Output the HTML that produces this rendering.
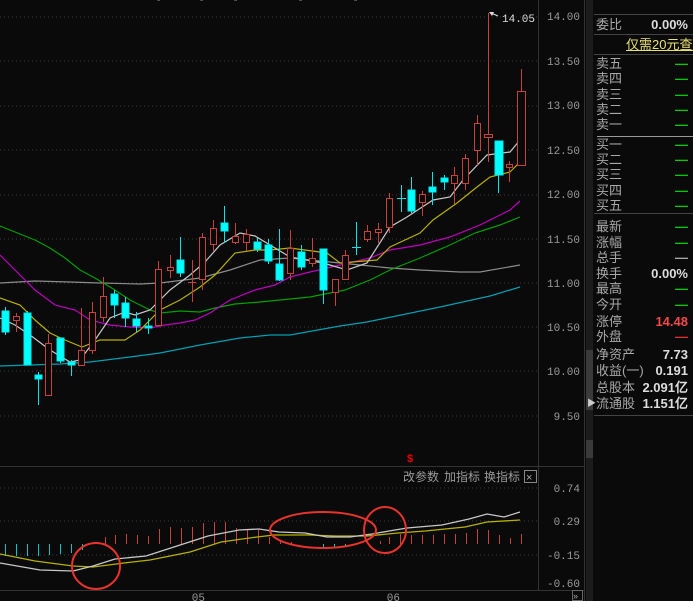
<!DOCTYPE html>
<html><head><meta charset="utf-8"><style>
body{margin:0;background:#0a0a0a;width:693px;height:601px;overflow:hidden;position:relative;font-family:"Liberation Sans","Noto Sans CJK SC",sans-serif}
svg{position:absolute;left:0;top:0}
.rp{position:absolute;left:596px;width:97px;font-size:13px;color:#a8a8a8;line-height:15px}
.rp span{position:absolute;right:5px;color:#ddd;font-weight:bold;font-family:"Liberation Sans",sans-serif}
.g{color:#0c0!important}
</style></head><body>
<svg width="693" height="601" xmlns="http://www.w3.org/2000/svg">
<g stroke="#3a3a3a" stroke-dasharray="1,3">
<line x1="0" y1="17" x2="538" y2="17"/><line x1="0" y1="61" x2="538" y2="61"/><line x1="0" y1="106" x2="538" y2="106"/><line x1="0" y1="150" x2="538" y2="150"/><line x1="0" y1="195" x2="538" y2="195"/><line x1="0" y1="239" x2="538" y2="239"/><line x1="0" y1="283" x2="538" y2="283"/><line x1="0" y1="327" x2="538" y2="327"/><line x1="0" y1="371" x2="538" y2="371"/><line x1="0" y1="416" x2="538" y2="416"/>
<line x1="0" y1="488" x2="538" y2="488"/><line x1="0" y1="521" x2="538" y2="521"/><line x1="0" y1="555" x2="538" y2="555"/>
</g>
<g stroke="#333" fill="none">
<line x1="538.5" y1="0" x2="538.5" y2="590"/>
<line x1="0" y1="466.5" x2="584" y2="466.5"/>
<line x1="0" y1="590.5" x2="584" y2="590.5"/>
<line x1="584.5" y1="0" x2="584.5" y2="601"/>
</g>
<rect x="586" y="0" width="7" height="601" fill="#1c1c1c"/>
<rect x="586" y="350" width="7" height="60" fill="#3a3a3a"/>
<rect x="586" y="440" width="7" height="18" fill="#3a3a3a"/>
<text x="587" y="406" fill="#ccc" font-size="9">▶</text>
<g fill="#9a9a9a" font-size="11" font-family="Liberation Mono,monospace" text-anchor="end">
<text x="580" y="20">14.00</text><text x="580" y="65">13.50</text><text x="580" y="109">13.00</text><text x="580" y="154">12.50</text><text x="580" y="198">12.00</text><text x="580" y="243">11.50</text><text x="580" y="287">11.00</text><text x="580" y="331">10.50</text><text x="580" y="375">10.00</text><text x="580" y="420">9.50</text>
<text x="580" y="492">0.74</text><text x="580" y="525">0.29</text><text x="580" y="559">-0.15</text><text x="580" y="587">-0.60</text>
<text x="205" y="601">05</text><text x="400" y="601">06</text>
</g>
<g fill="#ddd" font-size="8"><text x="157" y="4">*</text><text x="200" y="4">*</text><text x="234" y="4">*</text><text x="299" y="4">*</text><text x="354" y="4">*</text></g>
<!-- MAs -->
<g fill="none" stroke-width="1.2">
<polyline stroke="#00a0b4" points="0,366 30,365 60,364 90,362 130,357 160,353 200,345 240,338 270,335 290,335 340,326 367,322 440,307 490,296 520,287"/>
<polyline stroke="#8c8c8c" points="0,283 35,281 70,282 100,283 140,284 160,283 200,278 230,270 260,260 290,258 330,262 360,265 390,268 420,270 460,272 480,272 520,265"/>
<polyline stroke="#00a000" points="0,226 15,232 35,240 50,248 65,258 80,270 95,278 115,290 130,300 150,310 160,313 180,311 200,312 215,308 235,304 260,302 290,299 310,297 345,290 370,280 390,270 420,258 450,245 475,233 500,225 520,217"/>
<polyline stroke="#c000c0" points="0,255 20,275 35,290 55,305 75,310 90,320 110,325 130,327 150,328 165,325 180,323 195,320 210,313 230,300 255,290 275,285 290,277 310,272 340,265 370,258 390,250 420,245 450,237 480,225 500,215 510,210 520,201"/>
<polyline stroke="#b8b000" points="0,298 20,305 35,320 50,333 65,340 82,347 100,340 125,340 140,330 160,310 180,300 200,287 215,275 235,253 255,250 270,250 290,248 327,253 340,263 377,260 390,247 420,233 433,220 457,203 477,187 490,177 510,172 520,162"/>
<polyline stroke="#c8c8c8" points="0,318 15,325 30,335 50,350 70,362 80,360 95,340 110,318 125,312 135,315 150,310 170,290 190,275 205,262 220,245 240,233 255,236 270,245 290,257 323,263 347,270 367,263 390,227 407,217 433,200 450,197 463,180 487,155 510,152 520,140"/>
</g>
<!-- candles -->
<g stroke="#c8403a" fill="#0a0a0a">
<line x1="16.5" y1="313" x2="16.5" y2="332"/><rect x="13.5" y="316.5" width="6" height="4"/>
<line x1="48.5" y1="334" x2="48.5" y2="395"/><rect x="45.5" y="343.5" width="6" height="52"/>
<line x1="81.5" y1="308" x2="81.5" y2="365"/><rect x="78.5" y="350.5" width="6" height="15"/>
<line x1="92.5" y1="302" x2="92.5" y2="354"/><rect x="89.5" y="312.5" width="6" height="38"/>
<line x1="103.5" y1="277" x2="103.5" y2="322"/><rect x="100.5" y="296.5" width="6" height="21"/>
<line x1="158.5" y1="261" x2="158.5" y2="325"/><rect x="155.5" y="269.5" width="6" height="56"/>
<line x1="170.5" y1="255" x2="170.5" y2="278"/><rect x="167.5" y="267.5" width="6" height="3"/>
<line x1="192.5" y1="260" x2="192.5" y2="302"/><line x1="188" y1="282.5" x2="196" y2="282.5"/>
<line x1="202.5" y1="233" x2="202.5" y2="290"/><rect x="199.5" y="237.5" width="6" height="42"/>
<line x1="213.5" y1="220" x2="213.5" y2="252"/><rect x="210.5" y="228.5" width="6" height="16"/>
<line x1="235.5" y1="223" x2="235.5" y2="244"/><rect x="232.5" y="236.5" width="6" height="6"/>
<line x1="246.5" y1="229" x2="246.5" y2="251"/><rect x="243.5" y="234.5" width="6" height="8"/>
<line x1="290.5" y1="230" x2="290.5" y2="280"/><rect x="287.5" y="248.5" width="6" height="25"/>
<line x1="312.5" y1="238" x2="312.5" y2="267"/><rect x="309.5" y="258.5" width="6" height="5"/>
<line x1="335.5" y1="279" x2="335.5" y2="306"/><rect x="332.5" y="279.5" width="6" height="13"/>
<line x1="345.5" y1="250" x2="345.5" y2="280"/><rect x="342.5" y="255.5" width="6" height="24"/>
<line x1="367.5" y1="225" x2="367.5" y2="242"/><rect x="364.5" y="231.5" width="6" height="8"/>
<line x1="378.5" y1="223" x2="378.5" y2="243"/><rect x="375.5" y="229.5" width="6" height="3"/>
<line x1="389.5" y1="193" x2="389.5" y2="233"/><rect x="386.5" y="198.5" width="6" height="29"/>
<line x1="422.5" y1="191" x2="422.5" y2="216"/><rect x="419.5" y="194.5" width="6" height="8"/>
<line x1="454.5" y1="167" x2="454.5" y2="204"/><rect x="451.5" y="175.5" width="6" height="8"/>
<line x1="465.5" y1="154" x2="465.5" y2="190"/><rect x="462.5" y="158.5" width="6" height="25"/>
<line x1="477.5" y1="115" x2="477.5" y2="165"/><rect x="474.5" y="123.5" width="6" height="27"/>
<line x1="488.5" y1="13" x2="488.5" y2="162"/><rect x="484.5" y="134.5" width="8" height="3"/>
<line x1="509.5" y1="161" x2="509.5" y2="182"/><rect x="506.5" y="164.5" width="6" height="3"/>
<line x1="521.5" y1="69" x2="521.5" y2="165"/><rect x="517.5" y="91.5" width="8" height="74"/>
</g>
<g stroke="#00e8ee" fill="#00ffff">
<line x1="5.5" y1="307" x2="5.5" y2="335"/><rect x="2" y="311" width="7" height="21"/>
<line x1="27.5" y1="311" x2="27.5" y2="365"/><rect x="24" y="313" width="7" height="52"/>
<line x1="38.5" y1="372" x2="38.5" y2="405"/><rect x="35" y="375" width="7" height="4"/>
<line x1="60.5" y1="338" x2="60.5" y2="363"/><rect x="57" y="338" width="7" height="23"/>
<line x1="71.5" y1="360" x2="71.5" y2="376"/><rect x="68" y="362" width="7" height="3"/>
<line x1="114.5" y1="290" x2="114.5" y2="318"/><rect x="111" y="294" width="7" height="11"/>
<line x1="125.5" y1="297" x2="125.5" y2="327"/><rect x="122" y="303" width="7" height="15"/>
<line x1="136.5" y1="312" x2="136.5" y2="332"/><rect x="133" y="319" width="7" height="7"/>
<line x1="148.5" y1="318" x2="148.5" y2="334"/><rect x="145" y="326" width="7" height="2"/>
<line x1="180.5" y1="237" x2="180.5" y2="277"/><rect x="177" y="260" width="7" height="13"/>
<line x1="224.5" y1="206" x2="224.5" y2="243"/><rect x="221" y="223" width="7" height="8"/>
<line x1="257.5" y1="238" x2="257.5" y2="252"/><rect x="254" y="242" width="7" height="7"/>
<line x1="268.5" y1="239" x2="268.5" y2="264"/><rect x="265" y="245" width="7" height="16"/>
<line x1="279.5" y1="229" x2="279.5" y2="281"/><rect x="276" y="264" width="7" height="16"/>
<line x1="301.5" y1="245" x2="301.5" y2="270"/><rect x="298" y="252" width="7" height="15"/>
<line x1="323.5" y1="249" x2="323.5" y2="304"/><rect x="320" y="249" width="7" height="41"/>
<line x1="356.5" y1="222" x2="356.5" y2="255"/><line x1="352" y1="247.5" x2="361" y2="247.5"/>
<line x1="401.5" y1="185" x2="401.5" y2="212"/><line x1="397" y1="198.5" x2="406" y2="198.5"/>
<line x1="411.5" y1="177" x2="411.5" y2="213"/><rect x="408" y="190" width="7" height="21"/>
<line x1="432.5" y1="172" x2="432.5" y2="205"/><rect x="429" y="187" width="7" height="5"/>
<line x1="444.5" y1="175" x2="444.5" y2="190"/><rect x="441" y="178" width="7" height="4"/>
<line x1="498.5" y1="141" x2="498.5" y2="193"/><rect x="495" y="141" width="8" height="34"/>
</g>
<polyline points="491,13 498,16" stroke="#ddd" fill="none"/><polygon points="489,12 494,12 492,16" fill="#ddd"/>
<text x="502" y="22" fill="#ddd" font-size="11" font-family="Liberation Mono,monospace">14.05</text>
<text x="407" y="462" fill="#e00" font-size="11" font-weight="bold">$</text>
<!-- MACD -->
<g stroke="#00c8d0">
<line x1="5.5" y1="544" x2="5.5" y2="556"/><line x1="16.5" y1="544" x2="16.5" y2="556"/><line x1="27.5" y1="544" x2="27.5" y2="556"/><line x1="38.5" y1="544" x2="38.5" y2="556"/><line x1="49.5" y1="544" x2="49.5" y2="555"/><line x1="60.5" y1="544" x2="60.5" y2="554"/><line x1="71.5" y1="544" x2="71.5" y2="553"/><line x1="82.5" y1="544" x2="82.5" y2="550"/>
<line x1="323.5" y1="544" x2="323.5" y2="547"/><line x1="334.5" y1="544" x2="334.5" y2="547"/><line x1="345.5" y1="544" x2="345.5" y2="546"/>
</g>
<g stroke="#c8403a">
<line x1="105.5" y1="544" x2="105.5" y2="537"/><line x1="115.5" y1="544" x2="115.5" y2="535"/><line x1="126.5" y1="544" x2="126.5" y2="534"/><line x1="137.5" y1="544" x2="137.5" y2="535"/><line x1="148.5" y1="544" x2="148.5" y2="536"/><line x1="159.5" y1="544" x2="159.5" y2="529"/><line x1="170.5" y1="544" x2="170.5" y2="527"/><line x1="181.5" y1="544" x2="181.5" y2="528"/><line x1="192.5" y1="544" x2="192.5" y2="527"/><line x1="203.5" y1="544" x2="203.5" y2="523"/><line x1="214.5" y1="544" x2="214.5" y2="522"/><line x1="225.5" y1="544" x2="225.5" y2="522"/><line x1="236.5" y1="544" x2="236.5" y2="528"/><line x1="247.5" y1="544" x2="247.5" y2="529"/><line x1="258.5" y1="544" x2="258.5" y2="530"/><line x1="269.5" y1="544" x2="269.5" y2="537"/><line x1="280.5" y1="544" x2="280.5" y2="541"/><line x1="291.5" y1="544" x2="291.5" y2="542"/>
<line x1="380.5" y1="544" x2="380.5" y2="541"/><line x1="389.5" y1="544" x2="389.5" y2="537"/><line x1="400.5" y1="544" x2="400.5" y2="534"/><line x1="411.5" y1="544" x2="411.5" y2="535"/><line x1="422.5" y1="544" x2="422.5" y2="535"/><line x1="433.5" y1="544" x2="433.5" y2="535"/><line x1="444.5" y1="544" x2="444.5" y2="534"/><line x1="455.5" y1="544" x2="455.5" y2="534"/><line x1="466.5" y1="544" x2="466.5" y2="533"/><line x1="477.5" y1="544" x2="477.5" y2="529"/><line x1="488.5" y1="544" x2="488.5" y2="530"/><line x1="499.5" y1="544" x2="499.5" y2="535"/><line x1="510.5" y1="544" x2="510.5" y2="538"/><line x1="521.5" y1="544" x2="521.5" y2="534"/>
</g>
<polyline fill="none" stroke="#b8b000" stroke-width="1.3" points="0,554 35,561 73,566 93,567 124,563 150,560 190,552 221,542 257,537 274,535 310,535 336,536 367,536 398,533 425,531 465,527 487,522 520,520"/>
<polyline fill="none" stroke="#c8c8c8" stroke-width="1.3" points="0,563 40,570 73,571 93,566 115,559 146,556 177,546 208,536 239,530 259,529 279,532 305,533 327,537 350,537 372,534 389,531 407,528 442,525 469,519 487,514 504,517 520,512"/>
<g fill="none" stroke="#e8322c" stroke-width="2">
<ellipse cx="96" cy="566" rx="24" ry="23"/>
<ellipse cx="323" cy="530" rx="53" ry="18"/>
<ellipse cx="385" cy="530" rx="21" ry="23"/>
</g>
<g fill="#9a9a9a" font-size="12" font-family="Liberation Sans,Noto Sans CJK SC,sans-serif"><text x="403" y="481">改参数</text><text x="444" y="481">加指标</text><text x="484" y="481">换指标</text></g>
<rect x="524.5" y="470.5" width="12" height="12" fill="none" stroke="#888"/><text x="526" y="481" fill="#aaa" font-size="11">×</text>
<rect x="572.5" y="590.5" width="10" height="10" fill="none" stroke="#666"/><text x="573" y="599" fill="#aaa" font-size="9">»</text>
<!-- right panel lines -->
<g stroke="#444"><line x1="594" y1="14.5" x2="693" y2="14.5"/><line x1="594" y1="34.5" x2="693" y2="34.5"/><line x1="594" y1="54.5" x2="693" y2="54.5"/><line x1="594" y1="213.5" x2="693" y2="213.5"/><line x1="594" y1="415.5" x2="693" y2="415.5"/></g>
<line x1="597" y1="136.5" x2="693" y2="136.5" stroke="#999"/>
</svg>
<div class="rp" style="top:17px">委比<span>0.00%</span></div>
<div class="rp" style="top:37px;left:626px;color:#e8e070;text-decoration:underline;white-space:nowrap">仅需20元查看</div>
<div class="rp" style="top:56px">卖五<span class="g">—</span></div>
<div class="rp" style="top:71px">卖四<span class="g">—</span></div>
<div class="rp" style="top:87px">卖三<span class="g">—</span></div>
<div class="rp" style="top:102px">卖二<span class="g">—</span></div>
<div class="rp" style="top:117px">卖一<span class="g">—</span></div>
<div class="rp" style="top:137px">买一<span class="g">—</span></div>
<div class="rp" style="top:152px">买二<span class="g">—</span></div>
<div class="rp" style="top:167px">买三<span class="g">—</span></div>
<div class="rp" style="top:183px">买四<span class="g">—</span></div>
<div class="rp" style="top:198px">买五<span class="g">—</span></div>
<div class="rp" style="top:219px">最新<span class="g">—</span></div>
<div class="rp" style="top:235px">涨幅<span class="g">—</span></div>
<div class="rp" style="top:250px">总手<span style="color:#aaa">—</span></div>
<div class="rp" style="top:266px">换手<span>0.00%</span></div>
<div class="rp" style="top:281px">最高<span class="g">—</span></div>
<div class="rp" style="top:297px">今开<span class="g">—</span></div>
<div class="rp" style="top:314px">涨停<span style="color:#f04848">14.48</span></div>
<div class="rp" style="top:329px">外盘<span style="color:#e03030">—</span></div>
<div class="rp" style="top:347px">净资产<span>7.73</span></div>
<div class="rp" style="top:363px">收益(一)<span>0.191</span></div>
<div class="rp" style="top:380px">总股本<span>2.091亿</span></div>
<div class="rp" style="top:396px">流通股<span>1.151亿</span></div>
</body></html>
